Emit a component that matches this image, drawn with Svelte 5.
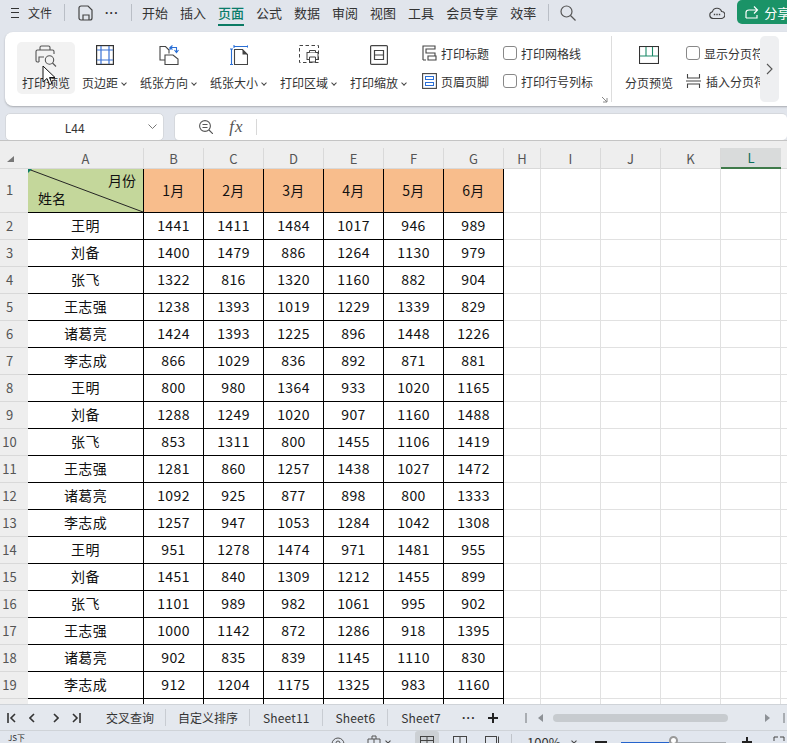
<script>
  const tabs = ['开始','插入','页面','公式','数据','审阅','视图','工具','会员专享','效率'];
  const letters = ['B','C','D','E','F','G'];
  const months = ['1月','2月','3月','4月','5月','6月'];
  const blanks = ['H','I','J','K','L'];
  const rows = [
    ['王明',1441,1411,1484,1017,946,989],
    ['刘备',1400,1479,886,1264,1130,979],
    ['张飞',1322,816,1320,1160,882,904],
    ['王志强',1238,1393,1019,1229,1339,829],
    ['诸葛亮',1424,1393,1225,896,1448,1226],
    ['李志成',866,1029,836,892,871,881],
    ['王明',800,980,1364,933,1020,1165],
    ['刘备',1288,1249,1020,907,1160,1488],
    ['张飞',853,1311,800,1455,1106,1419],
    ['王志强',1281,860,1257,1438,1027,1472],
    ['诸葛亮',1092,925,877,898,800,1333],
    ['李志成',1257,947,1053,1284,1042,1308],
    ['王明',951,1278,1474,971,1481,955],
    ['刘备',1451,840,1309,1212,1455,899],
    ['张飞',1101,989,982,1061,995,902],
    ['王志强',1000,1142,872,1286,918,1395],
    ['诸葛亮',902,835,839,1145,1110,830],
    ['李志成',912,1204,1175,1325,983,1160],
    ['',null,null,null,null,null,null]
  ];
  const sheets = ['交叉查询','自定义排序','Sheet11','Sheet6','Sheet7'];
</script>

<div class="app">
  <header class="titlebar">
    <div class="menu"><span class="burger"><i></i><i></i><i></i></span><span>文件</span></div>
    <span class="vsep first"></span>
    <svg class="save" width="15" height="16" viewBox="0 0 15 16" fill="none" stroke="#444" stroke-width="1.2"><path d="M3 1h7l4 4v8a2 2 0 0 1-2 2H3a2 2 0 0 1-2-2V3a2 2 0 0 1 2-2z"/><path d="M5 15v-5h6v5"/></svg>
    <span class="dots">···</span>
    <span class="vsep"></span>
    <nav class="tabs">
      {#each tabs as t}
        <span class="tab" class:on={t === '页面'}>{t}</span>
      {/each}
    </nav>
    <span class="vsep last"></span>
    <svg class="search" width="16" height="16" viewBox="0 0 16 16" fill="none" stroke="#555" stroke-width="1.2"><circle cx="6.500" cy="6.500" r="5.500"/><path d="M10.500 10.500l5 5"/></svg>
    <svg class="cloud" width="16" height="12" viewBox="0 0 16 12" fill="none" stroke="#444" stroke-width="1.1"><path d="M4 11.500a3.400 3.400 0 0 1-.6-6.700A4.800 4.800 0 0 1 12.600 4.500 3.500 3.500 0 0 1 12 11.500z"/><path d="M4.800 7.500h1.400M7.300 7.500h1.400M9.800 7.500h1.400" stroke-width="1.500"/></svg>
    <div class="share">
      <svg width="14" height="14" viewBox="0 0 14 14" fill="none" stroke="#fff" stroke-width="1.200"><path d="M1 13V7.500Q1 5 4 5h8M9 1.500 12.500 5 9 8.500"/><path d="M1 13h11V10"/></svg>
      <span>分享</span>
    </div>
  </header>

  <section class="ribbon">
    <div class="tool active">
      <svg width="22" height="22" viewBox="0 0 22 22" fill="none" stroke="#555" stroke-width="1.100"><path d="M5 5V2.500Q5 1 6.500 1h7Q15 1 15 2.500V5"/><path d="M4 17H2.500Q1 17 1 15.500V6.500Q1 5 2.500 5h15Q19 5 19 6.500V9"/><path d="M4 17v-5h5"/><circle cx="14.500" cy="15" r="4.200"/><path d="M17.500 18l3.500 3.500"/></svg>
      <span class="lab">打印预览</span>
    </div>
    <div class="tool w1">
      <svg width="18" height="20" viewBox="0 0 18 20" fill="none"><rect x=".6" y=".6" width="16.800" height="18.800" stroke="#333" stroke-width="1.200"/><path d="M5 1v18M13 1v18M1 5h16M1 15h16" stroke="#3b72d6" stroke-width="1.200"/></svg>
      <span class="lab">页边距<em></em></span>
    </div>
    <div class="tool w2">
      <svg width="20" height="20" viewBox="0 0 20 20" fill="none"><path d="M6 15H1V1.500h5.500L10 5v3.500" stroke="#444" stroke-width="1.100"/><path d="M6 10h8l5 4v5.500H6z" stroke="#444" stroke-width="1.100" fill="#fff"/><path d="M11 5V2.500h6.500V7M19.500 5l-2 2.500-2-2.500M13.500 .5l-2.500 2 2.500 2" stroke="#2a6fd6" stroke-width="1.100"/></svg>
      <span class="lab">纸张方向<em></em></span>
    </div>
    <div class="tool w3">
      <svg width="18" height="20" viewBox="0 0 18 20" fill="none"><path d="M4 1.500h14M4 0v3M18 0v3M1.500 4v16M0 4h3M0 19.500h3" stroke="#2a6fd6" stroke-width="1.100"/><path d="M4.500 4.500h8l5 5v10h-13z" stroke="#444" stroke-width="1.100"/><path d="M12.500 4.500v5h5z" fill="#444"/></svg>
      <span class="lab">纸张大小<em></em></span>
    </div>
    <div class="tool w4">
      <svg width="20" height="19" viewBox="0 0 20 19" fill="none"><rect x=".5" y=".5" width="19" height="17" stroke="#444" stroke-dasharray="3.500 2.500"/><rect x="8" y="7.500" width="11" height="7" fill="#fff" stroke="#444"/><path d="M10.500 7.500V5.500h6v2M10.500 12h6v5h-6z" stroke="#444" fill="#fff"/></svg>
      <span class="lab">打印区域<em></em></span>
    </div>
    <div class="tool w5">
      <svg width="18" height="20" viewBox="0 0 18 20" fill="none" stroke="#444" stroke-width="1.200"><rect x=".6" y=".6" width="16.800" height="18.800" rx="1"/><path d="M4.500 5.500h9v9h-9zM4.500 10h9"/></svg>
      <span class="lab">打印缩放<em></em></span>
    </div>
    <div class="col c1">
      <div class="line"><svg width="15" height="16" viewBox="0 0 15 16" fill="none" stroke="#444" stroke-width="1.100"><path d="M1 15V1h12v3H4v4h9v3"/><path d="M1 15h3M6 11h8v4H6z"/></svg><span>打印标题</span></div>
      <div class="line"><svg width="15" height="16" viewBox="0 0 15 16" fill="none"><rect x=".6" y=".6" width="13.800" height="14.800" stroke="#444" stroke-width="1.100"/><rect x="3.500" y="3.500" width="8" height="3" stroke="#2a6fd6"/><rect x="3.500" y="9.500" width="8" height="3" stroke="#2a6fd6"/></svg><span>页眉页脚</span></div>
    </div>
    <div class="col c2">
      <label class="line"><i class="box"></i><span>打印网格线</span></label>
      <label class="line"><i class="box"></i><span>打印行号列标</span></label>
    </div>
    <svg class="launcher" width="6" height="6" viewBox="0 0 6 6" fill="none" stroke="#888"><path d="M0 0l5 5M5 1v4H1"/></svg>
    <span class="rsep"></span>
    <div class="tool w6">
      <svg width="20" height="18" viewBox="0 0 20 18" fill="none"><rect x=".5" y=".5" width="19" height="17" stroke="#333" stroke-width="1.100"/><path d="M1 10h18M7 1v9M13.500 1v9" stroke="#1c8a68" stroke-width="1.100"/></svg>
      <span class="lab">分页预览</span>
    </div>
    <div class="col c3">
      <label class="line"><i class="box"></i><span>显示分页符</span></label>
      <div class="line"><svg width="15" height="16" viewBox="0 0 15 16" fill="none" stroke="#444" stroke-width="1.100"><path d="M1.500 1v4h12V1M0 8h15M1.500 15v-4h12v4"/></svg><span>插入分页符</span></div>
    </div>
    <div class="more"><svg width="7" height="12" viewBox="0 0 7 12" fill="none" stroke="#555" stroke-width="1.100"><path d="M1 1l5 5-5 5"/></svg></div>
  </section>

  <section class="formula">
    <div class="namebox"><span>L44</span><svg width="9" height="5" viewBox="0 0 9 5" fill="none" stroke="#777"><path d="M.5.500l4 4 4-4"/></svg></div>
    <div class="fbar">
      <svg class="zoomi" width="14" height="14" viewBox="0 0 14 14" fill="none" stroke="#555" stroke-width="1.100"><circle cx="6" cy="6" r="5.400"/><path d="M3.500 4.500h5M3.500 7.500h5M10 10l4 4"/></svg>
      <span class="fx">fx</span>
      <i class="fsep"></i>
    </div>
  </section>

  <main class="sheet">
    <div class="strip"></div>
    <div class="grid">
      <div class="corner"><i></i></div>
      <div class="ch">A</div>
      {#each letters as l}<div class="ch">{l}</div>{/each}
      {#each blanks as l}<div class="ch" class:sel={l === 'L'}>{l}</div>{/each}
      <div class="ch last"></div>

      <div class="rh">1</div>
      <div class="cell head diag">
        <svg class="slash" viewBox="0 0 115 44" preserveAspectRatio="none"><path d="M0 0L115 44" stroke="#222" stroke-width="1"/></svg>
        <i class="mark"></i>
        <span class="m">月份</span><span class="n">姓名</span>
      </div>
      {#each months as m}<div class="cell head org">{m}</div>{/each}
      {#each blanks as l}<div class="blank"></div>{/each}
      <div class="blank end"></div>

      {#each rows as r, i}
        <div class="rh">{i + 2}</div>
        {#each r as v}<div class="cell">{v ?? ''}</div>{/each}
        {#each blanks as l}<div class="blank"></div>{/each}
        <div class="blank end"></div>
      {/each}
    </div>
  </main>

  <section class="sheetbar">
    <div class="navs">
      <svg width="9" height="10" viewBox="0 0 9 10" fill="none" stroke="#333" stroke-width="1.600"><path d="M1 0v10M8 1L4 5l4 4"/></svg>
      <svg class="n2" width="6" height="10" viewBox="0 0 6 10" fill="none" stroke="#333" stroke-width="1.600"><path d="M5 1L1 5l4 4"/></svg>
      <svg class="n3" width="6" height="10" viewBox="0 0 6 10" fill="none" stroke="#333" stroke-width="1.600"><path d="M1 1l4 4-4 4"/></svg>
      <svg class="n4" width="9" height="10" viewBox="0 0 9 10" fill="none" stroke="#333" stroke-width="1.600"><path d="M8 0v10M1 1l4 4-4 4"/></svg>
    </div>
    <div class="sheets">
      {#each sheets as s}<span class="st">{s}</span>{/each}
    </div>
    <span class="sdots">···</span>
    <span class="plus"></span>
    <i class="bar b1"></i>
    <i class="tri l"></i>
    <div class="track"></div>
    <i class="tri r"></i>
    <i class="bar b2"></i>
  </section>

  <footer class="status">
    <span class="js">JS下</span>
    <svg class="eye" width="14" height="14" viewBox="0 0 14 14" fill="none" stroke="#555"><circle cx="7" cy="7" r="6"/><circle cx="7" cy="6" r="2"/></svg>
    <svg class="pg" width="14" height="14" viewBox="0 0 14 14" fill="none" stroke="#555"><path d="M1 4h12v9H1zM5 4V1h4v3M7 4v9"/></svg>
    <span class="caret"></span>
    <div class="viewbtn"><svg width="14" height="13" viewBox="0 0 14 13" fill="none" stroke="#444"><rect x=".5" y=".5" width="13" height="12"/><path d="M.5 4.500h13M.5 8.500h13M7 .5v12"/></svg></div>
    <svg class="v2" width="14" height="13" viewBox="0 0 14 13" fill="none" stroke="#444"><rect x=".5" y=".5" width="13" height="12"/><path d="M7 .5v12"/></svg>
    <svg class="v3" width="14" height="13" viewBox="0 0 14 13" fill="none" stroke="#444"><rect x=".5" y=".5" width="11" height="12"/><path d="M13.500 .5v12"/></svg>
    <i class="ssep"></i>
    <span class="pct">100%</span>
    <span class="caret c2"></span>
    <i class="minus"></i>
    <div class="slider"><b></b><u></u></div>
    <span class="splus"></span>
    <svg class="full" width="12" height="12" viewBox="0 0 12 12" fill="none" stroke="#444"><path d="M1 5V1h4M7 1h4v4"/></svg>
  </footer>

  <svg class="cursor" width="14" height="22" viewBox="0 0 14 22"><path d="M1 1v16l4-3.500 2.500 6 2.500-1-2.500-6H13z" fill="#fff" stroke="#111" stroke-width="1"/></svg>
</div>

<style>
  :global(body) { margin: 0; }
  .app {
    position: relative;
    width: 787px;
    height: 743px;
    overflow: hidden;
    background: #e1e5ec;
    font-family: "Noto Sans CJK SC", "Noto Sans", sans-serif;
    color: #333;
    font-size: 12px;
  }
  .titlebar {
    display: flex;
    align-items: center;
    height: 25px;
    padding: 0 0 7px 11px;
    white-space: nowrap;
  }
  .titlebar > * { flex: none; }
  .menu { display: flex; align-items: center; gap: 9px; width: 41px; font-size: 12px; }
  .burger { display: flex; flex-direction: column; gap: 3.500px; width: 8px; }
  .burger i { display: block; height: 1px; background: #333; }
  .vsep { width: 1px; height: 17px; background: #b9bec6; margin-left: 12px; }
  .vsep.first { margin-left: 12px; }
  .vsep.last { margin-left: 12px; }
  .save { margin-left: 13px; }
  .dots { margin-left: 12px; width: 14px; font-family: "Liberation Sans", sans-serif; font-size: 12px; font-weight: 700; letter-spacing: .6px; }
  .tabs { display: flex; gap: 12px; margin-left: 10px; font-size: 13px; color: #333; }
  .tab { position: relative; line-height: 20px; }
  .tab.on { color: #0a7c6a; font-weight: 500; }
  .tab.on::after {
    content: "";
    position: absolute;
    left: 0;
    right: 0;
    bottom: -3px;
    height: 2px;
    background: #0b7a64;
  }
  .search { margin-left: 11px; }
  .cloud { margin-left: 133px; }
  .share {
    display: flex;
    align-items: center;
    gap: 5px;
    width: 60px;
    height: 24px;
    margin-left: 12px;
    padding-left: 8px;
    background: #1a9367;
    border-radius: 5px;
    color: #fff;
    font-size: 13px;
    box-sizing: border-box;
    align-self: flex-start;
  }

  .ribbon {
    position: relative;
    display: flex;
    align-items: flex-start;
    box-sizing: border-box;
    width: 790px;
    height: 74px;
    margin-left: 5px;
    padding: 10px 0 0 12px;
    background: #fff;
    border-radius: 8px;
    box-shadow: 0 1px 2px rgba(0,0,0,.25);
    white-space: nowrap;
  }
  .tool {
    display: flex;
    flex-direction: column;
    align-items: center;
    height: 52px;
    padding-top: 3px;
    box-sizing: border-box;
    flex: none;
    width: 58px;
  }
  .tool svg { flex: none; margin-bottom: auto; }
  .tool .lab { margin-bottom: 2px; line-height: 18px; font-size: 12px; color: #333; }
  .tool.active { background: #f2f2f2; border-radius: 5px; }
  .lab em { display: inline-block; width: 5px; height: 5px; margin: 0 0 2px 4px; position: relative; }
  .lab em::before { content: ""; position: absolute; left: 0; top: 0; width: 3px; height: 3px; border: solid #444; border-width: 0 1.200px 1.200px 0; transform: rotate(45deg); }
  .w1 { width: 59px; }
  .w2 { width: 69px; }
  .w3 { width: 71px; }
  .w4 { width: 69px; }
  .w5 { width: 71px; }
  .col { display: flex; flex-direction: column; margin-top: -3px; flex: none; }
  .line { display: flex; align-items: center; gap: 4px; height: 28px; font-size: 12px; color: #333; }
  .line svg { flex: none; }
  .c1 { width: 81px; margin-left: 8px; }
  .c2 { width: 108px; }
  .c3 { width: 74px; overflow: hidden; }
  .c3 .line svg { margin-right: 1px; }
  .box { display: block; width: 12px; height: 12px; border: 1px solid #888; border-radius: 3px; background: #fff; flex: none; }
  .launcher { position: absolute; left: 597px; top: 65px; }
  .rsep { width: 1px; height: 66px; background: #ddd; margin-top: -6px; flex: none; }
  .w6 { width: 74px; padding-top: 4px; }
  .more {
    position: absolute;
    left: 755px;
    top: 4px;
    width: 19px;
    height: 66px;
    display: flex;
    align-items: center;
    justify-content: center;
    background: #eeeff1;
    border-radius: 5px;
  }

  .formula { display: flex; gap: 10px; height: 28px; margin: 7px 0 0 5px; }
  .namebox, .fbar {
    display: flex;
    align-items: center;
    box-sizing: border-box;
    height: 28px;
    background: #fff;
    border: 1px solid #d5d8dd;
    border-radius: 5px;
  }
  .namebox { width: 161px; position: relative; justify-content: center; padding-right: 20px; font-size: 12px; }
  .namebox svg { position: absolute; right: 6px; top: 10px; }
  .fbar { width: 620px; border-right: 0; padding-left: 24px; }
  .fx { margin-left: 16px; font-family: "Liberation Serif", serif; font-style: italic; font-size: 17px; letter-spacing: 1px; color: #555; }
  .fsep { width: 1px; height: 16px; background: #d8d8d8; margin-left: 12px; }

  .sheet {
    height: 563px;
    margin-top: -1px;
    overflow: hidden;
    background: #fff;
    border-top: 1px solid #c4c4c4;
    position: relative;
  }
  .strip { height: 7px; background: #eeeeee; }
  .grid {
    display: grid;
    grid-template-columns: 28px 116px repeat(6, 60px) 37px repeat(4, 60px) 6px;
    grid-template-rows: 21px 44px repeat(19, 27px);
  }
  .corner, .ch, .rh { background: #eeeeee; color: #555; }
  .corner { position: relative; border-bottom: 1px solid #d9d9d9; }
  .corner i { position: absolute; left: 7px; top: 8px; width: 0; height: 0; border-style: solid; border-width: 0 0 6px 7px; border-color: transparent transparent #777 transparent; }
  .ch {
    display: flex;
    align-items: center;
    justify-content: center;
    border-right: 1px solid #d9d9d9;
    border-bottom: 1px solid #d9d9d9;
    font-size: 13px;
    box-sizing: border-box;
  }
  .ch.sel { background: #d9dbdb; color: #0d6f5a; border-bottom: 2px solid #3f7a4a; border-right: 0; }
  .ch.last { border-right: 0; }
  .rh {
    display: flex;
    align-items: center;
    justify-content: center;
    border-bottom: 1px solid #d9d9d9;
    font-size: 13px;
    box-sizing: border-box;
    padding: 0 9px 2px 0;
  }
  .cell {
    display: flex;
    align-items: center;
    justify-content: center;
    box-sizing: border-box;
    border-right: 1px solid #000;
    border-bottom: 1px solid #000;
    padding-bottom: 2px;
    font-size: 14px;
    letter-spacing: .4px;
    color: #111;
  }
  .org { background: #f8bd8c; }
  .diag { position: relative; background: #c4d79b; display: block; padding: 0; }
  .slash { position: absolute; inset: 0; width: 100%; height: 100%; }
  .mark { position: absolute; left: 0; top: 0; width: 0; height: 0; border-style: solid; border-width: 4px 4px 0 0; border-color: #0b7a64 transparent transparent transparent; }
  .m, .n { position: absolute; line-height: 20px; letter-spacing: 0; }
  .m { right: 7px; top: 1px; }
  .n { left: 10px; bottom: 4px; }
  .blank { border-right: 1px solid #e1e1e1; border-bottom: 1px solid #e1e1e1; box-sizing: border-box; }
  .blank.end { border-right: 0; }

  .sheetbar {
    position: absolute;
    left: 0;
    top: 704px;
    display: flex;
    align-items: center;
    width: 787px;
    height: 27px;
    background: #e4e8ee;
    border-top: 1px solid #cfd3d8;
    border-bottom: 1px solid #cfd3d8;
    box-sizing: border-box;
  }
  .navs { display: flex; align-items: center; margin-left: 7px; width: 99px; flex: none; }
  .n2 { margin-left: 13px; }
  .n3 { margin-left: 18px; }
  .n4 { margin-left: 13px; }
  .sheets { display: flex; width: 333px; font-size: 12px; color: #333; flex: none; white-space: nowrap; }
  .st { padding: 0 12px 0 13px; border-right: 1px solid #c8ccd2; line-height: 17px; }
  .st:first-child { padding: 0 11px 0 0; }
  .st:nth-child(2) { padding-right: 11px; padding-left: 12px; }
  .st:nth-child(n+3) { letter-spacing: .15px; }
  .st:last-child { border-right: 0; }
  .sdots { margin-left: 23px; width: 14px; font-family: "Liberation Sans", sans-serif; font-size: 12px; font-weight: 700; letter-spacing: .6px; flex: none; }
  .plus { width: 10px; height: 10px; margin-left: 12px; flex: none; background: linear-gradient(#222,#222) center/100% 2px no-repeat, linear-gradient(#222,#222) center/2px 100% no-repeat; }
  .bar { width: 2px; height: 10px; background: #a9adb2; flex: none; }
  .b1 { margin-left: 27px; }
  .tri { width: 0; height: 0; border-style: solid; flex: none; }
  .tri.l { margin-left: 11px; border-width: 4px 5px 4px 0; border-color: transparent #8d9196 transparent transparent; }
  .tri.r { margin-left: 37px; border-width: 4px 0 4px 5px; border-color: transparent transparent transparent #8d9196; }
  .track { width: 175px; height: 8px; margin-left: 10px; background: #c7cbcf; border-radius: 4px; flex: none; }
  .b2 { margin-left: 13px; }

  .status { position: absolute; left: 0; top: 731px; width: 787px; height: 12px; background: #e1e6ee; overflow: hidden; }
  .status > * { position: absolute; }
  .js { left: 8px; top: 2px; font-size: 8px; line-height: 10px; }
  .eye { left: 331px; top: 6px; }
  .pg { left: 367px; top: 4px; }
  .caret { left: 386px; top: 8px; width: 3px; height: 3px; border: solid #444; border-width: 0 1px 1px 0; transform: rotate(45deg); }
  .caret.c2 { left: 572px; top: 8px; }
  .viewbtn { left: 415px; top: 0; width: 24px; height: 16px; background: #ccd0d4; border-radius: 3px; display: flex; justify-content: center; padding-top: 5px; box-sizing: border-box; }
  .v2 { left: 453px; top: 5px; }
  .v3 { left: 485px; top: 5px; }
  .ssep { left: 511px; top: 3px; width: 1px; height: 12px; background: #c0c4ca; }
  .pct { left: 527px; top: 4px; font-size: 13px; line-height: 15px; color: #333; }
  .minus { left: 595px; top: 10px; width: 12px; height: 2px; background: #222; }
  .slider { left: 621px; top: 11px; width: 105px; height: 5px; background: #a7abb0; }
  .slider b { position: absolute; left: 0; top: 0; width: 48px; height: 5px; background: #2563cc; }
  .slider u { position: absolute; left: 48px; top: -6px; width: 9px; height: 9px; border-radius: 50%; background: #fff; border: 2px solid #999; box-sizing: border-box; }
  .splus { left: 742px; top: 6px; width: 10px; height: 10px; background: linear-gradient(#222,#222) center/100% 2px no-repeat, linear-gradient(#222,#222) center/2px 100% no-repeat; }
  .full { left: 773px; top: 5px; }

  .cursor { position: absolute; left: 42px; top: 65px; }
</style>
